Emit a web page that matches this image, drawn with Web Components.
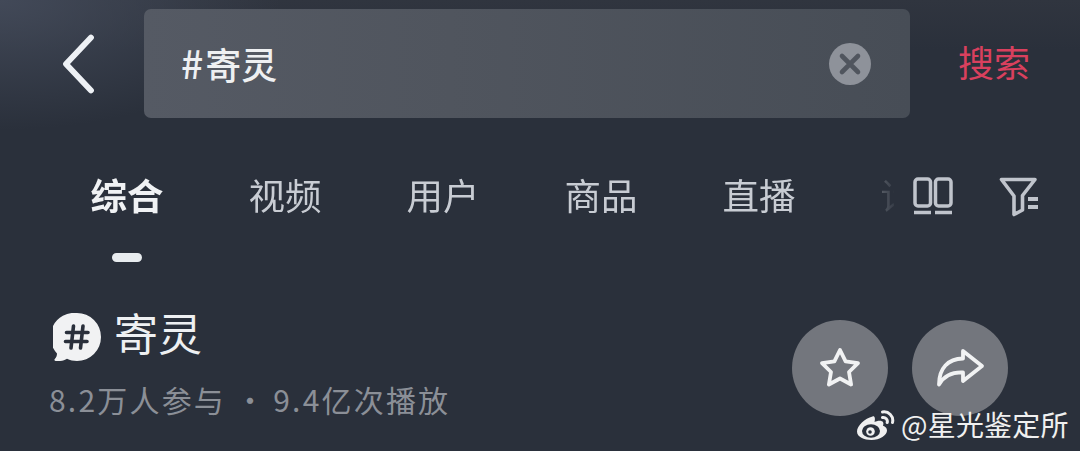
<!DOCTYPE html>
<html lang="zh">
<head>
<meta charset="utf-8">
<style>
html,body{margin:0;padding:0;background:#2a303b;}
body{width:1080px;height:451px;overflow:hidden;font-family:"Noto Sans CJK SC","Noto Sans",sans-serif;}
</style>
</head>
<body>
<app-page>
  <search-bar text="寄灵" action="搜索"></search-bar>
  <tab-strip>
    <tab-item active>综合</tab-item>
    <tab-item>视频</tab-item>
    <tab-item>用户</tab-item>
    <tab-item>商品</tab-item>
    <tab-item>直播</tab-item>
    <tab-item>话题</tab-item>
  </tab-strip>
  <topic-info title="寄灵" stats="8.2万人参与"  plays="9.4亿次播放"></topic-info>
  <water-mark>@星光鉴定所</water-mark>
</app-page>
<script>
function def(name, html){
  customElements.define(name, class extends HTMLElement{
    connectedCallback(){
      if(this.shadowRoot) return;
      const r=this.attachShadow({mode:'open'});
      r.innerHTML=typeof html==='function'?html(this):html;
    }
  });
}
def('app-page',`<style>
:host{display:block;position:relative;width:1080px;height:451px;overflow:hidden;
background:radial-gradient(ellipse 280px 130px at 0 0,#424958 0%,rgba(66,73,88,0) 100%),linear-gradient(180deg,#30353f 0,#2a303b 50px);}
</style><slot></slot>`);

def('search-bar',h=>`<style>
:host{display:flex;align-items:stretch;box-sizing:border-box;padding-top:9px;height:118px;}
.back{width:144px;display:flex;align-items:center;justify-content:flex-start;}
.back svg{margin-left:60px;}
.box{width:766px;box-sizing:border-box;border-radius:7px;background:linear-gradient(90deg,#555a64 0%,#50555e 40%,#474d56 100%);
display:flex;align-items:center;justify-content:space-between;padding:0 39px 0 37px;}
.q{font-size:36px;line-height:1;color:#eef0f2;margin-top:-2px;font-weight:500;}
.q b{font-weight:500;font-size:39px;letter-spacing:2px;}
.go{margin-left:48px;font-size:36px;line-height:109px;color:#d9405e;margin-top:-2px;}
</style>
<div class="back"><svg width="38" height="60" viewBox="0 0 38 60"><path d="M31 3.500 6 30 31 56.500" fill="none" stroke="#eef1f5" stroke-width="5.800" stroke-linecap="round" stroke-linejoin="round"/></svg></div>
<div class="box"><span class="q"><b>#</b>${h.getAttribute('text')}</span>
<svg width="42" height="42" viewBox="0 0 42 42"><circle cx="21" cy="21" r="21" fill="#8e929a"/><path d="M13 13l16 16M29 13 13 29" stroke="#50555e" stroke-width="4.600" stroke-linecap="round"/></svg></div>
<span class="go">${h.getAttribute('action')}</span>`);

def('tab-strip',`<style>
:host{display:flex;align-items:flex-start;margin-top:54px;height:90px;}
.tabs{display:flex;gap:86px;width:894px;box-sizing:border-box;padding-left:91px;overflow:hidden;flex:none;
-webkit-mask-image:linear-gradient(90deg,#000 0,#000 870px,rgba(0,0,0,.25) 883px,rgba(0,0,0,.08) 894px);mask-image:linear-gradient(90deg,#000 0,#000 870px,rgba(0,0,0,.25) 883px,rgba(0,0,0,.08) 894px);}
.icons{display:flex;gap:46px;margin-left:19px;margin-top:5px;}
svg{display:block;}
</style>
<div class="tabs"><slot></slot></div>
<div class="icons">
<svg width="40" height="38" viewBox="0 0 40 38" fill="none" stroke="#c0c4cc" stroke-width="3.500"><rect x="2" y="2" width="15.500" height="27" rx="3"/><rect x="22.500" y="2" width="15.500" height="27" rx="3"/><path d="M1 35.500H18M22 35.500H39" stroke-width="3.600"/></svg>
<svg width="40" height="40" viewBox="0 0 40 40" fill="none" stroke="#c0c4cc" stroke-width="3.600"><path d="M2.500 2.500H36L23.500 18.500V33L15 37.500V19Z" stroke-linejoin="round"/><path d="M29 22H39M29 30H39" stroke-width="4"/></svg>
</div>`);

def('tab-item',h=>`<style>
:host{display:flex;flex-direction:column;align-items:center;width:72px;flex:none;}
.t{font-size:36.500px;line-height:48px;height:48px;white-space:nowrap;color:#c8ccd3;margin-top:-1px;}
:host([active]) .t{color:#f0f2f4;font-weight:700;}
.i{display:none;width:30px;height:9px;border-radius:5px;background:#e8ecef;margin-top:34px;}
:host([active]) .i{display:block;}
</style><div class="t"><slot></slot></div><div class="i"></div>`);

def('topic-info',h=>`<style>
:host{display:flex;justify-content:space-between;align-items:flex-start;margin-top:51px;padding:0 72px 0 49px;}
.row{display:flex;align-items:center;height:48px;}
.row svg{margin-left:4px;margin-right:13px;display:block;}
.t{font-size:44px;line-height:48px;color:#eef0f2;margin-top:-11px;}
.s{font-size:30px;line-height:40px;margin-top:18px;color:#8b8f97;white-space:nowrap;letter-spacing:2.200px;display:flex;}
.dot{margin:0 6px 0 9px;}
.btns{display:flex;gap:24px;margin-top:7px;}
</style>
<div>
<div class="row"><svg width="48" height="48" viewBox="0 0 48 48"><path d="M24 0a24 24 0 0 1 0 48c-3.600 0-7-.8-10-2.200-2.800 1.800-6.800 2.700-11.500 2.100-1.200-.2-1.500-1.300-.7-2 1.500-1.400 2.200-3.300 2.200-5.500A24 24 0 0 1 24 0Z" fill="#f1f2f3"/><path d="M20.500 13 18 35M30 13 27.500 35M13.500 19.500H35M12.500 28.500H34" stroke="#2a303b" stroke-width="3.600" stroke-linecap="round" fill="none"/></svg><span class="t">${h.getAttribute('title')}</span></div>
<div class="s"><span>${h.getAttribute('stats')}</span><span class="dot">·</span><span>${h.getAttribute('plays')}</span></div>
</div>
<div class="btns">
<round-button><svg width="44" height="42" viewBox="0 0 44 42"><path d="M22 3 27.600 14.400 40 16.200 31 25 33.100 37.500 22 31.500 10.900 37.500 13 25 4 16.200 16.400 14.400Z" fill="none" stroke="#f1f2f3" stroke-width="3.800" stroke-linejoin="round"/></svg></round-button>
<round-button><svg width="50" height="40" viewBox="0 0 50 40"><path d="M28 3 47 18 28 33V24.500C18 24 10 26.500 4 36.500 4 20 13 10.800 28 10.500Z" fill="none" stroke="#f1f2f3" stroke-width="3.800" stroke-linejoin="round"/></svg></round-button>
</div>`);

def('round-button',`<style>
:host{display:flex;align-items:center;justify-content:center;width:96px;height:96px;border-radius:50%;background:#73767d;}
svg{display:block;}
</style><slot></slot>`);

def('water-mark',`<style>
:host{position:absolute;left:857px;top:405px;display:flex;align-items:center;gap:6px;height:40px;color:#f0f0f0;font-size:28px;line-height:40px;white-space:nowrap;}
svg{display:block;}
.t{letter-spacing:.2px;margin-top:-2px;}
</style>
<svg width="38" height="30" viewBox="0 0 38 30"><path d="M15.500 6.500C8 8.500 0 15.500 0 21.500 0 27 7 30 14.500 30 23 30 30 25 30 20.500c0-3-2.500-4-4-4.700 1-2.800.3-5-3.500-5-1.800 0-3.500.6-5 1.300 1-3.500.2-6.600-2-5.600Z" fill="#efefef"/><ellipse cx="14" cy="21" rx="9" ry="6.700" fill="#2a303b"/><circle cx="13.500" cy="21.500" r="4.300" fill="#efefef"/><circle cx="13" cy="22" r="1.800" fill="#2a303b"/><path d="M25.500 2C31.500 1 37 6 35.500 12.500M25.500 7.500C28.500 7 31 9.500 30.200 12.500" fill="none" stroke="#efefef" stroke-width="3" stroke-linecap="round"/></svg>
<span class="t"><slot></slot></span>`);
</script>
</body>
</html>
